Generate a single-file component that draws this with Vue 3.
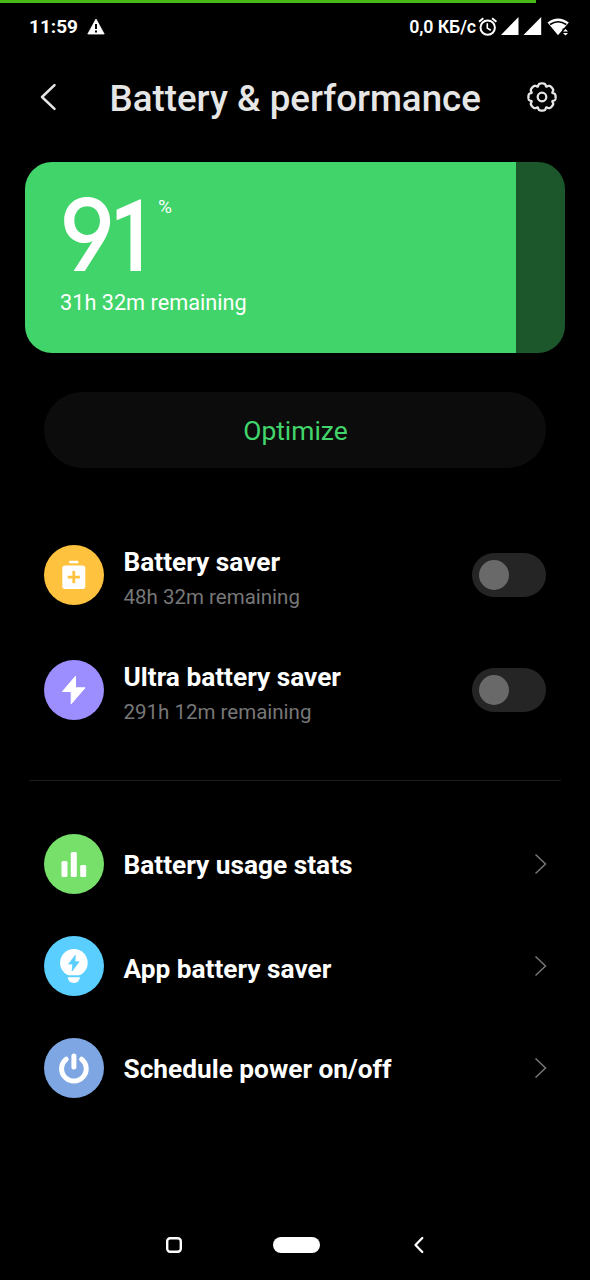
<script setup>
const savers = [
  { icon: 'saver', title: 'Battery saver', sub: '48h 32m remaining' },
  { icon: 'ultra', title: 'Ultra battery saver', sub: '291h 12m remaining' },
]
const links = [
  { icon: 'stats', title: 'Battery usage stats' },
  { icon: 'app', title: 'App battery saver' },
  { icon: 'power', title: 'Schedule power on/off' },
]
const level = 91

// Outline of the settings cog: a circle with narrow notches between wide teeth
const teeth = 8
const points = []
for (let i = 0; i < 240; i++) {
  const a = (i / 240) * Math.PI * 2
  const c = Math.cos(teeth * a)
  const r = 13.6 - 2.4 * Math.exp(-(1 + c) * 2.4)
  points.push(`${(16 + r * Math.sin(a)).toFixed(2)} ${(16 - r * Math.cos(a)).toFixed(2)}`)
}
const cog = 'M' + points.join('L') + 'Z'
</script>

<template>
  <div class="screen">
    <div class="charge"><div class="charge-fill"></div></div>

    <div class="status">
      <span class="time">11:59</span>
      <svg class="warn" width="18" height="17" viewBox="0 0 18 17">
        <path d="M9 1 17.2 16H.8Z" fill="#fff" stroke="#fff" stroke-width=".8" stroke-linejoin="round" />
        <path d="M9 6v5M9 12.5v2" stroke="#000" stroke-width="2" />
      </svg>
      <span class="speed">0,0 КБ/с</span>
      <svg class="icons" width="94" height="22" viewBox="0 0 94 22">
        <g fill="none" stroke="#fff">
          <circle cx="10.7" cy="11.6" r="7.2" stroke-width="2" />
          <path d="M10.3 7.3v4.8l3.5 2.2" stroke-width="1.6" />
          <path d="M2 5.7 6.3 2.2M15.1 2.2l4.3 3.5" stroke-width="2" />
        </g>
        <path d="M41.5 1v18H24ZM64.2 1v18H46.5Z" fill="#fff" />
        <path d="M70.5 6.5Q81 -1.5 91.800 6.5L81 19.3Z" fill="#fff" />
        <path d="M73 8.500Q81 3.200 89.300 8.500" fill="none" stroke="#000" stroke-width="1.500" />
        <path d="M85.500 12.500h6v8h-6z" fill="#000" />
        <path d="m86 15.500 2.500-2.500 2.500 2.500ZM86 17l2.500 2.500L91 17Z" fill="#fff" />
      </svg>
    </div>

    <header class="header">
      <svg class="back" width="18" height="28" viewBox="0 0 18 28">
        <path d="M15.500 2.200 3 14l12.500 11.800" fill="none" stroke="#e6e6e6" stroke-width="2.500" stroke-linecap="round" stroke-linejoin="round" />
      </svg>
      <h1>Battery &amp; performance</h1>
      <svg class="cog" width="32" height="32" viewBox="0 0 32 32">
        <g fill="none" stroke="#e6e6e6" stroke-width="2.300" stroke-linejoin="round">
          <path :d="cog" />
          <circle cx="16" cy="16" r="4.300" />
        </g>
      </svg>
    </header>

    <section class="card" :style="{ '--level': level + '%' }">
      <div class="level">
        <div class="number"><span class="nine">9</span><span class="one">1</span></div>
        <span class="percent">%</span>
      </div>
      <div class="left">31h 32m remaining</div>
    </section>

    <button class="optimize">Optimize</button>

    <section class="savers">
      <div v-for="s in savers" :key="s.icon" class="row">
        <div class="badge" :class="s.icon">
          <svg v-if="s.icon === 'saver'" width="60" height="60" viewBox="0 0 60 60">
            <path d="M25.300 15.800h9v2.500h-9z" fill="#fff" />
            <rect x="18.300" y="20.500" width="23" height="23.500" rx="2.800" fill="#fff" />
            <path d="M29.800 26v12.200M23.700 32.100h12.200" stroke="#ffc23e" stroke-width="2.800" />
          </svg>
          <svg v-else width="60" height="60" viewBox="0 0 60 60">
            <path d="M31.500 16.300 18.500 31.500h8.700v12.300L41 27.800h-9.500Z" fill="#fff" stroke="#fff" stroke-width="1" stroke-linejoin="round" />
          </svg>
        </div>
        <div class="copy">
          <div class="title">{{ s.title }}</div>
          <div class="sub">{{ s.sub }}</div>
        </div>
        <div class="toggle"><div class="knob"></div></div>
      </div>
    </section>

    <section class="links">
      <div v-for="l in links" :key="l.icon" class="row">
        <div class="badge" :class="l.icon">
          <svg v-if="l.icon === 'stats'" width="60" height="60" viewBox="0 0 60 60" fill="#fff">
            <rect x="17.500" y="27" width="6" height="16" rx="1.500" />
            <rect x="26.800" y="18" width="6" height="25" rx="1.500" />
            <rect x="36.200" y="31" width="6" height="12" rx="1.500" />
          </svg>
          <svg v-else-if="l.icon === 'app'" width="60" height="60" viewBox="0 0 60 60">
            <circle cx="29.900" cy="26.800" r="13.800" fill="#fff" />
            <path d="M20 39.300h20v2.200H20z" fill="#59ceff" />
            <path d="M23.700 41.300h12.200c-.4 3.400-2.300 5.700-6.100 5.700s-5.700-2.300-6.100-5.700Z" fill="#fff" />
            <path d="m31.300 19.300-6.600 8.700h4.100l-.7 7 6.900-9.200h-4.100Z" fill="#59ceff" stroke="#59ceff" stroke-width=".8" />
          </svg>
          <svg v-else width="60" height="60" viewBox="0 0 60 60" fill="none" stroke="#fff" stroke-width="5" stroke-linecap="round">
            <path d="M22.200 21.200A12.300 12.300 0 1 0 37.600 21.200" />
            <path d="M29.900 18v11" />
          </svg>
        </div>
        <div class="title link-title" :class="l.icon + '-title'">{{ l.title }}</div>
        <svg class="chevron" width="14" height="22" viewBox="0 0 14 22">
          <path d="m2.500 1.500 10 9.500-10 9.500" fill="none" stroke="#777" stroke-width="1.500" />
        </svg>
      </div>
    </section>

    <nav class="nav">
      <svg width="18" height="18" viewBox="0 0 18 18"><rect x="2.200" y="2.200" width="13.600" height="13.600" rx="3" fill="none" stroke="#fff" stroke-width="2.400" /></svg>
      <div class="home"></div>
      <svg width="12" height="18" viewBox="0 0 12 18"><path d="M9.300 2 2.500 9l6.800 7" fill="none" stroke="#fff" stroke-width="2.300" stroke-linecap="round" stroke-linejoin="round" /></svg>
    </nav>
  </div>
</template>

<style>
body { background: #000; }
</style>

<style scoped>
.screen {
  box-sizing: border-box;
  width: 590px;
  height: 1280px;
  background: #000;
  color: #fff;
  font-family: Roboto, "Liberation Sans", sans-serif;
  display: flex;
  flex-direction: column;
  overflow: hidden;
}
svg { display: block; flex: none; }
.charge { height: 3px; }
.charge-fill { width: 536px; height: 3px; background: #46b914; }
.status {
  height: 48px;
  padding: 0 19px 0 29px;
  display: flex;
  align-items: center;
  font-size: 19px;
  font-weight: 700;
  line-height: 22px;
  white-space: nowrap;
}
.time { width: 49px; }
.warn { margin-left: 9px; margin-top: -2px; }
.speed { margin-left: auto; font-size: 17.800px; font-weight: 600; letter-spacing: -0.1px; }
.icons { margin-left: 1px; margin-top: -1px; }
.header {
  height: 111px;
  box-sizing: border-box;
  padding: 0 32px 19px 39px;
  display: flex;
  align-items: center;
}
h1 {
  margin: 3px auto 0 50px;
  padding-left: 2.600px;
  color: #e6e6e6;
  font-size: 36.700px;
  font-weight: 500;
  line-height: 44px;
  white-space: nowrap;
}
.card {
  box-sizing: border-box;
  height: 191px;
  margin: 0 25px;
  padding: 27px 35px 0;
  border-radius: 27px;
  background: linear-gradient(to right, #41d46a var(--level), #1c562b var(--level));
}
.level { display: flex; height: 101px; align-items: flex-start; }
.number {
  display: flex;
  align-items: baseline;
  width: 98px;
  height: 92px;
  line-height: 92px;
}
.nine {
  width: 51px;
  margin-left: -1px;
  font-family: Inter, sans-serif;
  font-feature-settings: "ss01";
  font-size: 100px;
  font-weight: 500;
  transform: scaleX(0.95);
  transform-origin: left;
}
.one {
  width: 46px;
  font-size: 101px;
  font-weight: 600;
  transform: scaleX(0.8);
  transform-origin: left;
}
.percent { font-size: 19px; line-height: 24px; margin-top: 6px; font-weight: 400; }
.left { font-size: 21.700px; line-height: 26px; }
.optimize {
  height: 76px;
  margin: 39px 44px 0;
  padding: 1px 0 0 1px;
  border: 0;
  border-radius: 38px;
  background: #0c0c0c;
  color: #42d56b;
  font: 400 26.400px/32px Roboto, sans-serif;
}
.savers {
  margin: 77px 29px 0;
  padding: 0 15px 60px;
  border-bottom: 1px solid #1c1c1c;
  display: grid;
  gap: 55px;
}
.row { height: 60px; display: flex; align-items: center; }
.badge { width: 60px; height: 60px; border-radius: 50%; flex: none; }
.saver { background: #ffc23e; }
.ultra { background: #9c8eff; }
.stats { background: #76e06a; }
.app { background: #59ceff; }
.power { background: #7da6e2; }
.copy { margin-left: 19.500px; padding-top: 4px; }
.title { font-size: 26.250px; font-weight: 700; line-height: 34px; white-space: nowrap; }
.sub { color: #777; font-size: 20.500px; line-height: 24px; margin-top: 6px; white-space: nowrap; }
.toggle {
  box-sizing: border-box;
  width: 74px;
  height: 44px;
  margin-left: auto;
  padding: 7px;
  border-radius: 22px;
  background: #252525;
}
.knob { width: 30px; height: 30px; border-radius: 50%; background: #696969; }
.links { margin: 53px 43px 0 44px; display: grid; gap: 42px; }
.link-title { margin-left: 19.500px; padding-top: 2px; }
.app-title { padding-top: 5px; }
.power-title { padding-top: 1px; }
.chevron { margin-left: auto; }
.nav {
  height: 20px;
  margin: auto 165px 25px 165px;
  display: flex;
  align-items: center;
  justify-content: space-between;
}
.home { width: 47px; height: 16px; margin-right: 4px; border-radius: 8px; background: #fff; }
</style>
